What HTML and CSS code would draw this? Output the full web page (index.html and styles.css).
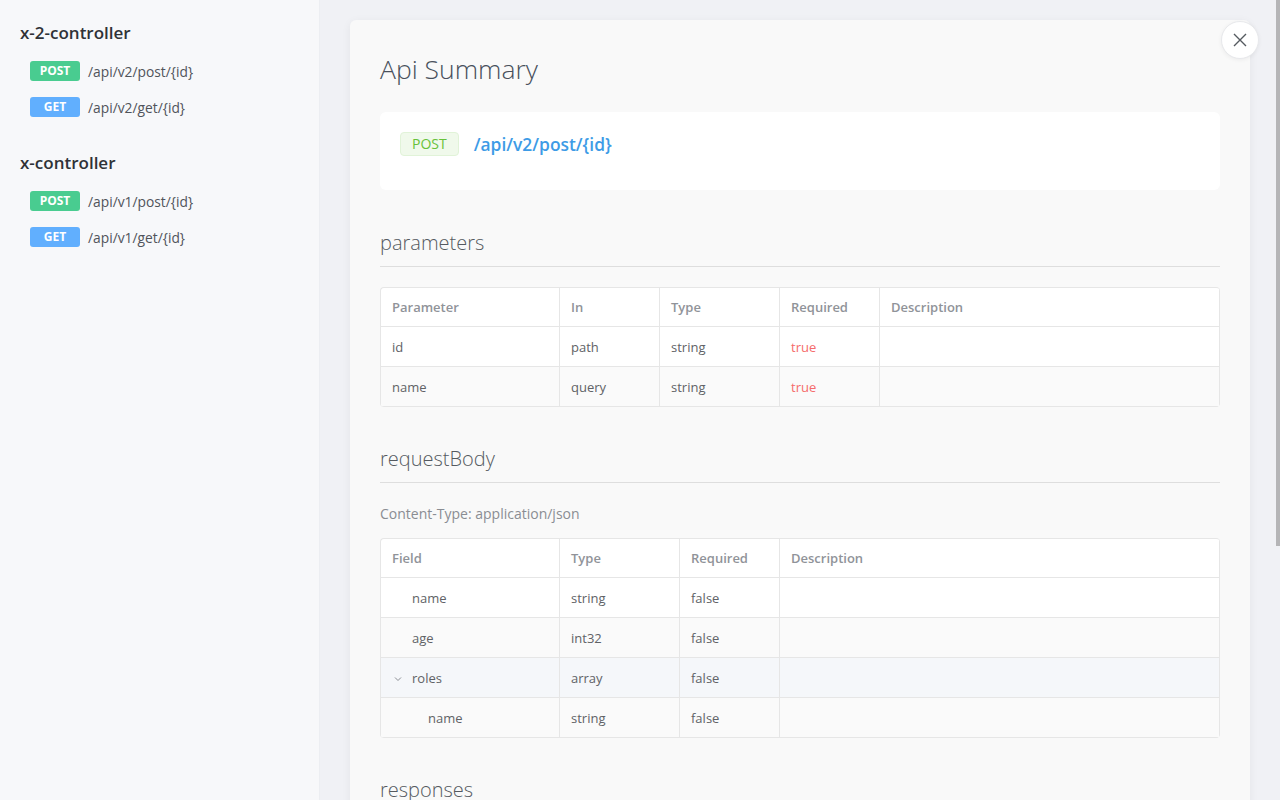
FILE: index.html
```html
<!DOCTYPE html>
<html lang="en">
<head>
<meta charset="utf-8">
<title>Api Summary</title>
<link rel="stylesheet" href="styles.css">
</head>
<body>
<div class="app">
  <aside class="sidebar">
    <div class="group">
      <h3 class="group-title">x-2-controller</h3>
      <ul class="api-list">
        <li class="api-item"><span class="method method-post">POST</span><span class="api-path">/api/v2/post/{id}</span></li>
        <li class="api-item"><span class="method method-get">GET</span><span class="api-path">/api/v2/get/{id}</span></li>
      </ul>
    </div>
    <div class="group">
      <h3 class="group-title">x-controller</h3>
      <ul class="api-list">
        <li class="api-item"><span class="method method-post">POST</span><span class="api-path">/api/v1/post/{id}</span></li>
        <li class="api-item"><span class="method method-get">GET</span><span class="api-path">/api/v1/get/{id}</span></li>
      </ul>
    </div>
  </aside>

  <main class="main">
    <section class="panel">
      <h1 class="panel-title">Api Summary</h1>

      <div class="summary-card">
        <span class="tag-post">POST</span>
        <span class="summary-path">/api/v2/post/{id}</span>
      </div>

      <h2 class="section-title">parameters</h2>
      <table class="data-table params-table">
        <colgroup>
          <col class="c-179"><col class="c-100"><col class="c-120"><col class="c-100"><col>
        </colgroup>
        <thead>
          <tr><th>Parameter</th><th>In</th><th>Type</th><th>Required</th><th>Description</th></tr>
        </thead>
        <tbody>
          <tr><td>id</td><td>path</td><td>string</td><td class="req-true">true</td><td></td></tr>
          <tr class="striped"><td>name</td><td>query</td><td>string</td><td class="req-true">true</td><td></td></tr>
        </tbody>
      </table>

      <h2 class="section-title">requestBody</h2>
      <div class="content-type">Content-Type: application/json</div>
      <table class="data-table body-table">
        <colgroup>
          <col class="c-179"><col class="c-120"><col class="c-100"><col>
        </colgroup>
        <thead>
          <tr><th>Field</th><th>Type</th><th>Required</th><th>Description</th></tr>
        </thead>
        <tbody>
          <tr><td><span class="indent-0"></span>name</td><td>string</td><td>false</td><td></td></tr>
          <tr class="striped"><td><span class="indent-0"></span>age</td><td>int32</td><td>false</td><td></td></tr>
          <tr class="hovered"><td><span class="expand"><svg width="8" height="6" viewBox="0 0 8 6"><path d="M1 1.5 L4 4.5 L7 1.5" fill="none" stroke="#8a8d93" stroke-width="1"/></svg></span>roles</td><td>array</td><td>false</td><td></td></tr>
          <tr class="striped"><td><span class="indent-1"></span>name</td><td>string</td><td>false</td><td></td></tr>
        </tbody>
      </table>

      <h2 class="section-title">responses</h2>
      <table class="data-table resp-table">
        <colgroup>
          <col class="c-179"><col>
        </colgroup>
        <thead>
          <tr><th>Code</th><th>Description</th></tr>
        </thead>
        <tbody>
          <tr><td>200</td><td>OK</td></tr>
        </tbody>
      </table>
      <div class="content-type">Content-Type: */*</div>
      <table class="data-table body-table">
        <colgroup>
          <col class="c-179"><col class="c-120"><col class="c-100"><col>
        </colgroup>
        <thead>
          <tr><th>Field</th><th>Type</th><th>Required</th><th>Description</th></tr>
        </thead>
        <tbody>
          <tr><td>code</td><td>int32</td><td>false</td><td></td></tr>
          <tr class="striped"><td>message</td><td>string</td><td>false</td><td></td></tr>
          <tr><td>data</td><td>object</td><td>false</td><td></td></tr>
        </tbody>
      </table>
    </section>
  </main>

  <div class="scroll-thumb"></div>

  <button class="close-btn" aria-label="Close">
    <svg width="14" height="14" viewBox="0 0 14 14"><path d="M1 1 L13 13 M13 1 L1 13" stroke="#555a60" stroke-width="1.4" fill="none"/></svg>
  </button>
</div>
</body>
</html>
```

FILE: styles.css
```css
* { box-sizing: border-box; }

html, body {
  margin: 0;
  padding: 0;
  height: 100%;
  overflow: hidden;
}

body {
  font-family: "Open Sans", "Noto Sans", sans-serif;
  color: #333;
}

.app {
  display: flex;
  height: 100vh;
  position: relative;
}

/* Sidebar */
.sidebar {
  width: 320px;
  flex: none;
  background: #f7f8fa;
  border-right: 1px solid #eceef2;
  padding: 20px 20px;
}

.group { margin-bottom: 25px; }

.group-title {
  margin: 0;
  font-size: 17px;
  line-height: 26px;
  font-weight: 600;
  color: #2f3237;
}

.api-list {
  list-style: none;
  margin: 7px 0 0;
  padding: 0 0 0 10px;
}

.api-item {
  display: flex;
  align-items: center;
  height: 36px;
}

.method {
  width: 50px;
  height: 20px;
  border-radius: 3px;
  color: #fff;
  font-size: 12px;
  font-weight: 700;
  line-height: 20px;
  text-align: center;
  flex: none;
}

.method-post { background: #49cc90; }
.method-get { background: #61affe; }

.api-path {
  margin-left: 8px;
  font-size: 13.8px;
  color: #50545a;
}

/* Main */
.main {
  flex: 1;
  overflow: hidden;
  background: #f0f1f5;
  padding: 20px 30px 20px 30px;
}

.scroll-thumb {
  position: absolute;
  right: 0;
  top: 0;
  width: 4px;
  height: 546px;
  background: #b5b5b7;
}

.panel {
  background: #f9f9f9;
  border-radius: 6px;
  box-shadow: 0 2px 10px rgba(0, 0, 0, 0.06);
  padding: 30px 30px 50px;
}

.panel-title {
  margin: 0;
  font-size: 26.5px;
  line-height: 39px;
  font-weight: 300;
  color: #48505c;
}

.summary-card {
  margin-top: 23px;
  background: #fff;
  border-radius: 6px;
  padding: 20px 20px 34px;
  display: flex;
  align-items: center;
}

.tag-post {
  height: 24px;
  line-height: 22px;
  padding: 0 11px;
  font-size: 14px;
  color: #67c23a;
  background: #f0f9eb;
  border: 1px solid #e1f3d8;
  border-radius: 4px;
}

.summary-path {
  margin-left: 15px;
  font-size: 17.4px;
  font-weight: 600;
  color: #3d9be6;
}

.section-title {
  margin: 37px 0 0;
  font-size: 20px;
  line-height: 30px;
  font-weight: 300;
  color: #555a60;
  padding-bottom: 8px;
  border-bottom: 1px solid #dedede;
}

.summary-card + .section-title { margin-top: 38px; }

.content-type {
  margin-top: 21px;
  font-size: 14px;
  line-height: 20px;
  color: #8a8d93;
}

.data-table {
  width: 100%;
  border-collapse: separate;
  border-spacing: 0;
  table-layout: fixed;
  background: #fff;
  border-top: 1px solid #e6e6e6;
  border-left: 1px solid #e6e6e6;
  border-radius: 4px;
  overflow: hidden;
  font-size: 13px;
}

.params-table { margin-top: 20px; }
.body-table { margin-top: 14px; }
.resp-table { margin-top: 20px; }

.c-179 { width: 179px; }
.c-100 { width: 100px; }
.c-120 { width: 120px; }

.data-table th,
.data-table td {
  height: 40px;
  padding: 0 11px;
  text-align: left;
  border-right: 1px solid #e6e6e6;
  border-bottom: 1px solid #e6e6e6;
  white-space: nowrap;
}

.data-table th {
  height: 39px;
  font-weight: 600;
  color: #909399;
}

.data-table td { color: #606266; }

.data-table tr.striped td { background: #fafafa; }
.data-table tr.hovered td { background: #f5f7fa; }

.req-true { color: #f56c6c !important; }

.indent-0,
.indent-1,
.expand {
  display: inline-block;
  width: 20px;
  vertical-align: middle;
}

.indent-1 { width: 36px; }

.expand svg { display: block; margin-left: 2px; }

/* Close button */
.close-btn {
  position: absolute;
  left: 1221px;
  top: 21px;
  width: 38px;
  height: 38px;
  border-radius: 50%;
  background: #fff;
  border: 1px solid #e8e9ec;
  box-shadow: 0 1px 4px rgba(0, 0, 0, 0.06);
  display: flex;
  align-items: center;
  justify-content: center;
  padding: 0;
  cursor: pointer;
}
```
